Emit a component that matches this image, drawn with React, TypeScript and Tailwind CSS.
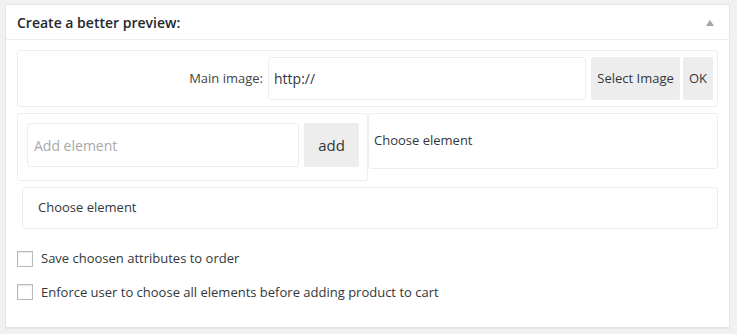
export default function App() {
  return (
    <div className="min-h-[334px] w-[737px] bg-[#f1f1f1] pl-[5px] pt-[4px] font-['Open_Sans',sans-serif] text-[#32373c]">
      <div className="w-[725px] border border-[#e5e5e5] bg-white shadow-[0_1px_1px_rgba(0,0,0,0.04)]">
        {/* Header */}
        <div className="flex h-[35px] items-center justify-between border-b border-[#eeeeee] pl-[11px] pr-[15px]">
          <h2 className="text-[14px] font-semibold text-[#23282d]">Create a better preview:</h2>
          <svg width="8" height="6" viewBox="0 0 8 6" className="mt-[1px]">
            <polygon points="4,0 8,6 0,6" fill="#a0a5aa" />
          </svg>
        </div>

        <div className="pb-[25px] pl-[11px] pr-[11px] pt-[10px]">
          {/* Main image row */}
          <div className="flex h-[57px] items-center rounded-[3px] border border-[#eeeeee] pr-[4px]">
            <label className="flex-1 pr-[5px] text-right text-[13px] text-[#444]">Main image:</label>
            <input
              type="text"
              defaultValue="http://"
              className="h-[43px] w-[318px] rounded-[3px] border border-[#eeeeee] px-[5px] text-[14px] text-[#32373c] outline-none"
            />
            <button className="ml-[5px] h-[43px] w-[89px] rounded-[2px] bg-[#ededed] text-[13px] text-[#32373c]">
              Select Image
            </button>
            <button className="ml-[3px] h-[43px] w-[30px] rounded-[2px] bg-[#ededed] text-[13px] text-[#32373c]">
              OK
            </button>
          </div>

          {/* Add element row */}
          <div className="mt-[6px] flex items-start">
            <div className="flex h-[68px] w-[351px] items-start gap-[5px] rounded-[3px] border border-[#eeeeee] pl-[9px] pt-[9px]">
              <input
                type="text"
                placeholder="Add element"
                className="h-[44px] w-[272px] rounded-[3px] border border-[#eeeeee] px-[6px] text-[14px] text-[#32373c] outline-none placeholder:text-[#a7aaad]"
              />
              <button className="h-[44px] w-[55px] rounded-[2px] bg-[#ededed] text-[15px] text-[#32373c]">add</button>
            </div>
            <div className="flex h-[56px] flex-1 items-center rounded-[3px] border border-[#eeeeee] pl-[5px] text-[13px] text-[#32373c]">
              Choose element
            </div>
          </div>

          {/* Choose element row */}
          <div className="ml-[5px] mt-[6px] flex h-[42px] items-center rounded-[3px] border border-[#eeeeee] pl-[15px] text-[13px] text-[#32373c]">
            Choose element
          </div>

          {/* Checkboxes */}
          <label className="mt-[20px] flex items-center gap-[8px] text-[13px] text-[#32373c]">
            <span className="h-[16px] w-[16px] border border-[#b4b9be] bg-white shadow-[inset_0_1px_2px_rgba(0,0,0,0.1)]" />
            Save choosen attributes to order
          </label>
          <label className="mt-[14px] flex items-center gap-[8px] text-[13px] text-[#32373c]">
            <span className="h-[16px] w-[16px] border border-[#b4b9be] bg-white shadow-[inset_0_1px_2px_rgba(0,0,0,0.1)]" />
            Enforce user to choose all elements before adding product to cart
          </label>
        </div>
      </div>
    </div>
  );
}
